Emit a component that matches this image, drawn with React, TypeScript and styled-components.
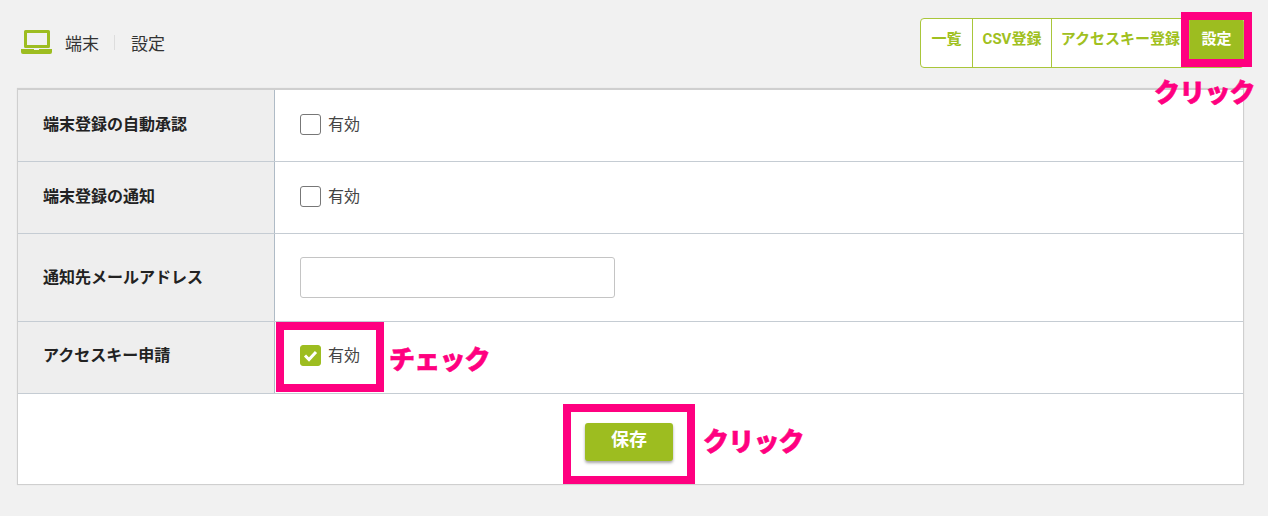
import React from "react";
import styled, { createGlobalStyle } from "styled-components";

const Global = createGlobalStyle`
  html, body { margin: 0; padding: 0; background: #f1f1f1; }
  body { font-family: "Roboto", "Noto Sans CJK JP", sans-serif; color: #333; }
  * { box-sizing: border-box; }
`;

const Page = styled.div`
  position: relative;
  width: 1268px;
  height: 516px;
  padding: 18px 24px 0 17px;
  overflow: hidden;
`;

const Header = styled.header`
  display: flex;
  justify-content: space-between;
  align-items: flex-start;
  height: 70px;
`;

const Title = styled.div`
  display: flex;
  align-items: center;
  height: 50px;
  padding-left: 4px;
  padding-bottom: 2px;
  font-size: 17px;
  color: #333;
`;

const Divider = styled.span`
  width: 1px;
  height: 15px;
  background: #ddd;
  margin: 0 16px 0 15px;
`;

const TitleIcon = styled.svg`
  width: 31px;
  height: 26px;
  margin-right: 13px;
`;

const Tabs = styled.nav`
  display: flex;
  height: 50px;
`;

const Tab = styled.div<{ $active?: boolean; $w: number }>`
  width: ${(p) => p.$w}px;
  display: flex;
  align-items: center;
  justify-content: center;
  padding-bottom: 12px;
  margin-left: -1px;
  font-size: 15px;
  font-weight: 700;
  white-space: nowrap;
  color: ${(p) => (p.$active ? "#fff" : "#a0c020")};
  background: ${(p) => (p.$active ? "#9dbd20" : "#fff")};
  border: 1px solid #a9c63a;
  &:first-child { border-radius: 4px 0 0 4px; margin-left: 0; }
  &:last-child { border-radius: 0 4px 4px 0; }
`;

const Panel = styled.section`
  width: 1227px;
  background: #fff;
  border: 1px solid #cfcfcf;
  border-top: 2px solid #cfcfcf;
  box-shadow: 0 0 1px rgba(0, 0, 0, 0.1);
`;

const Row = styled.div<{ $h: number; $lift?: number }>`
  --lift: ${(p) => p.$lift ?? 3}px;
  display: grid;
  grid-template-columns: 257px 1fr;
  height: ${(p) => p.$h}px;
  border-bottom: 1px solid #c5ccd3;
`;

const Label = styled.div`
  display: flex;
  align-items: center;
  padding-left: 25px;
  padding-bottom: calc(var(--lift) + 2px);
  background: #eeeeee;
  border-right: 1px solid #afbbc6;
  font-size: 16px;
  font-weight: 700;
  color: #222;
`;

const Field = styled.div`
  display: flex;
  align-items: center;
  padding-left: 25px;
`;

const Check = styled.span<{ $on?: boolean }>`
  display: inline-flex;
  align-items: center;
  justify-content: center;
  width: 21px;
  height: 21px;
  margin-bottom: var(--lift);
  border-radius: 3px;
  background: ${(p) => (p.$on ? "#9dbd20" : "#fff")};
  border: 1px solid ${(p) => (p.$on ? "#9dbd20" : "#777")};
`;

const CheckText = styled.span`
  margin-left: 7px;
  margin-bottom: calc(var(--lift) + 2px);
  font-size: 16px;
  color: #444;
`;

const TextInput = styled.div`
  width: 315px;
  height: 41px;
  margin-bottom: 1px;
  background: #fff;
  border: 1px solid #c4c4c4;
  border-radius: 3px;
`;

const Footer = styled.div`
  display: flex;
  justify-content: center;
  padding-top: 29px;
  height: 90px;
`;

const SaveButton = styled.div`
  display: flex;
  align-items: center;
  justify-content: center;
  width: 88px;
  height: 38px;
  margin-right: 3px;
  padding-bottom: 8px;
  border-radius: 3px;
  background: #9dbd20;
  color: #fff;
  font-size: 18px;
  font-weight: 700;
  box-shadow: 0 2px 3px rgba(0, 0, 0, 0.35);
`;

const Highlight = styled.div<{ $x: number; $y: number; $w: number; $h: number }>`
  position: absolute;
  left: ${(p) => p.$x}px;
  top: ${(p) => p.$y}px;
  width: ${(p) => p.$w}px;
  height: ${(p) => p.$h}px;
  border: 8px solid #ff0080;
`;

const Note = styled.div<{ $x: number; $y: number }>`
  position: absolute;
  left: ${(p) => p.$x}px;
  top: ${(p) => p.$y}px;
  font-family: "Noto Sans CJK JP", sans-serif;
  font-size: 26px;
  line-height: 32px;
  font-weight: 900;
  letter-spacing: -0.8px;
  color: #ff0080;
  -webkit-text-stroke: 0.6px #ff0080;
  white-space: nowrap;
`;

const Tick = () => (
  <svg width="15" height="13" viewBox="0 0 15 13" fill="none">
    <path d="M2 6.5 L6 10.5 L13 3" stroke="#fff" strokeWidth="3" />
  </svg>
);

const CheckRow = ({ label, on }: { label: string; on?: boolean }) => (
  <Field>
    <Check $on={on}>{on && <Tick />}</Check>
    <CheckText>{label}</CheckText>
  </Field>
);

export default function App() {
  return (
    <Page>
      <Global />
      <Header>
        <Title>
          <TitleIcon viewBox="0 0 31 26">
            <path
              fillRule="evenodd"
              d="M4.5 1 h23 a1.5 1.5 0 0 1 1.5 1.5 v15 a1.5 1.5 0 0 1-1.5 1.5 h-23 a1.5 1.5 0 0 1-1.5-1.5 v-15 a1.5 1.5 0 0 1 1.5-1.5 z M6 4 v12 h20 v-12 z"
              fill="#9dbd20"
            />
            <path d="M0 20 h13 v1 h5 v-1 h13 v3 a2 2 0 0 1-2 2 h-27 a2 2 0 0 1-2-2 z" fill="#9dbd20" />
          </TitleIcon>
          端末
          <Divider />
          設定
        </Title>
        <Tabs>
          <Tab $w={53}>一覧</Tab>
          <Tab $w={80}>CSV登録</Tab>
          <Tab $w={139}>アクセスキー登録</Tab>
          <Tab $w={55} $active>設定</Tab>
        </Tabs>
      </Header>
      <Panel>
        <Row $h={72}>
          <Label>端末登録の自動承認</Label>
          <CheckRow label="有効" />
        </Row>
        <Row $h={72}>
          <Label>端末登録の通知</Label>
          <CheckRow label="有効" />
        </Row>
        <Row $h={88} $lift={1}>
          <Label>通知先メールアドレス</Label>
          <Field>
            <TextInput />
          </Field>
        </Row>
        <Row $h={72} $lift={5}>
          <Label>アクセスキー申請</Label>
          <CheckRow label="有効" on />
        </Row>
        <Footer>
          <SaveButton>保存</SaveButton>
        </Footer>
      </Panel>
      <Highlight $x={1181} $y={12} $w={71} $h={55} />
      <Highlight $x={276} $y={322} $w={108} $h={70} />
      <Highlight $x={563} $y={404} $w={132} $h={80} />
      <Note $x={1154} $y={75}>クリック</Note>
      <Note $x={389} $y={342}>チェック</Note>
      <Note $x={703} $y={424}>クリック</Note>
    </Page>
  );
}
